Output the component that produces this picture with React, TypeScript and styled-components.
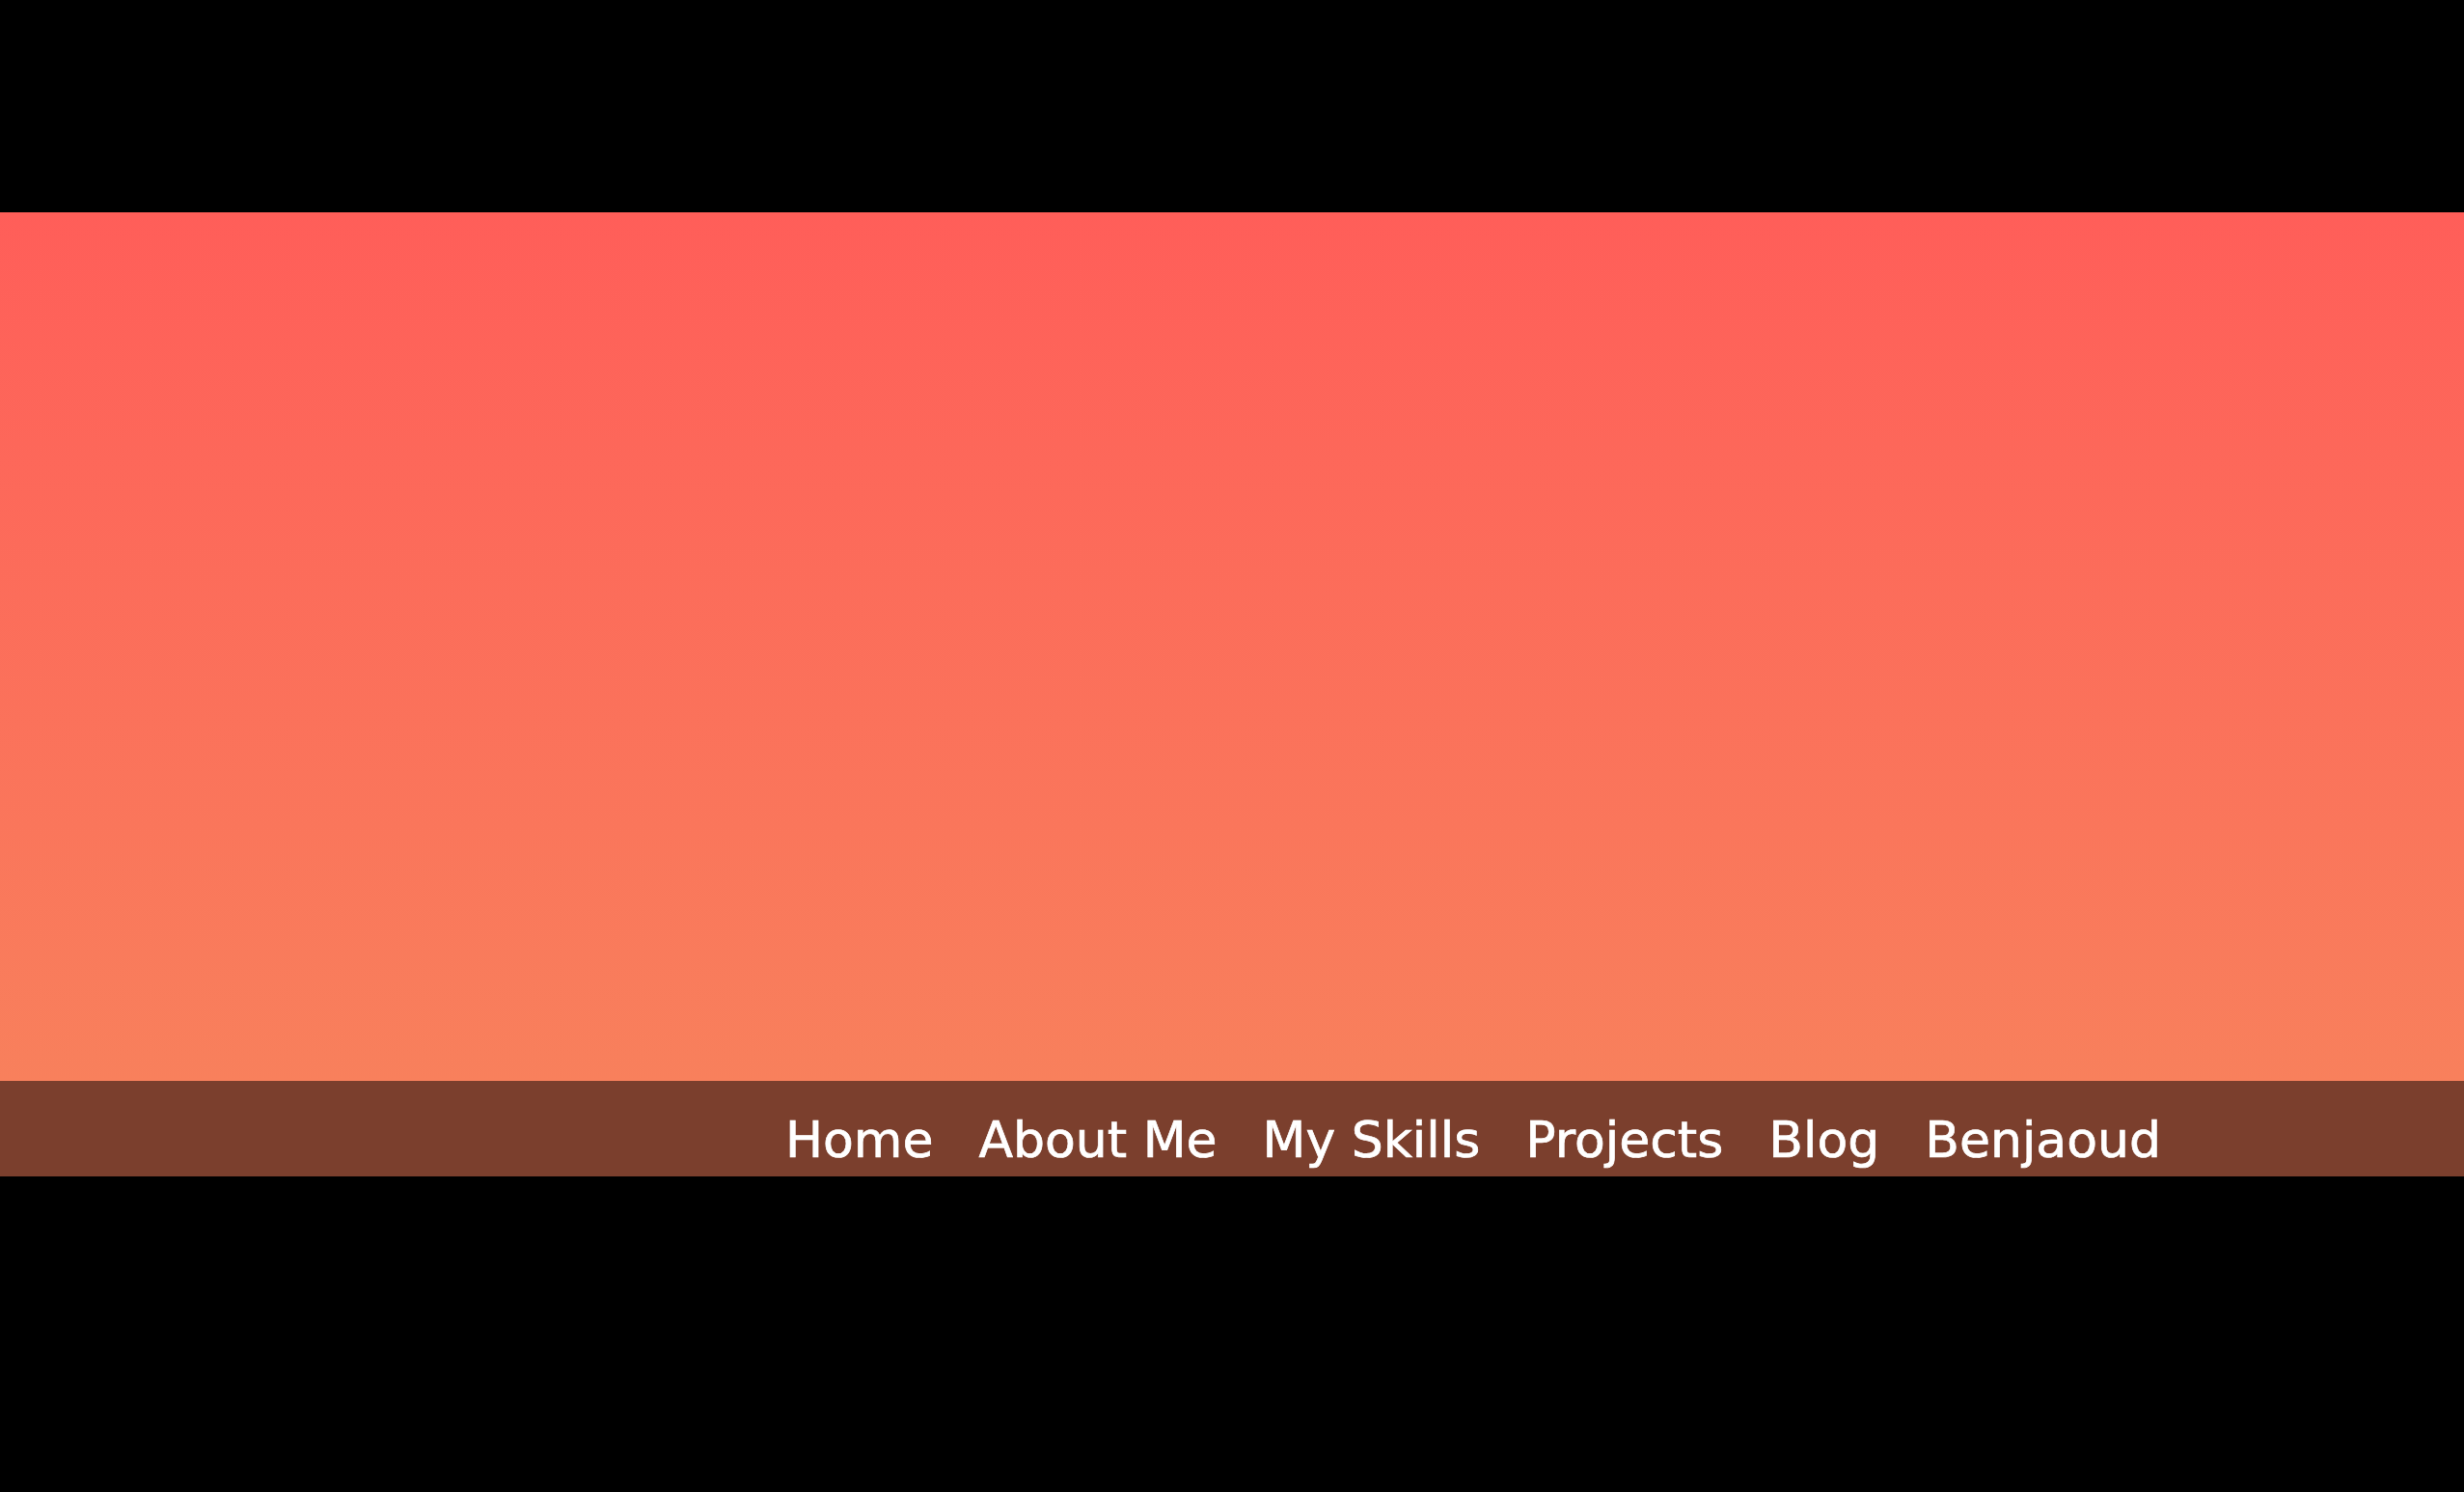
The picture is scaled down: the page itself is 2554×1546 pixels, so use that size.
import React from 'react'
import styled, { createGlobalStyle } from 'styled-components'

const GlobalStyle = createGlobalStyle`
  html, body {
    margin: 0;
    padding: 0;
    background: #000;
  }
  body {
    font-family: "DejaVu Sans", "Open Sans", sans-serif;
  }
`

const links = ['Home', 'About Me', 'My Skills', 'Projects', 'Blog', 'Benjaoud']

export default function App() {
  return (
    <>
      <GlobalStyle />
      <Page>
        <Header>
          <Hero />
          <Nav>
            <NavList>
              {links.map((l) => (
                <NavItem key={l}>
                  <NavLink href="#">{l}</NavLink>
                </NavItem>
              ))}
            </NavList>
          </Nav>
        </Header>
      </Page>
    </>
  )
}

const Page = styled.div`
  min-height: 1546px;
  padding-top: 220px;
  box-sizing: border-box;
  background: #000;
`

const Header = styled.header`
  display: flex;
  flex-direction: column;
`

const Hero = styled.section`
  height: 900px;
  background: linear-gradient(180deg, #ff5e59 0%, #f8805c 100%);
`

const Nav = styled.nav`
  height: 99px;
  background: #7b3f2d;
  display: flex;
  align-items: center;
  justify-content: flex-end;
  padding: 22px 314px 0 0;
  box-sizing: border-box;
`

const NavList = styled.ul`
  list-style: none;
  margin: 0;
  padding: 0;
  display: flex;
  gap: 47px;
`

const NavItem = styled.li`
  line-height: 1;
`

const NavLink = styled.a`
  color: #fff;
  text-decoration: none;
  font-size: 52px;
  font-weight: 400;
  -webkit-text-stroke: 0.7px #fff;
`
